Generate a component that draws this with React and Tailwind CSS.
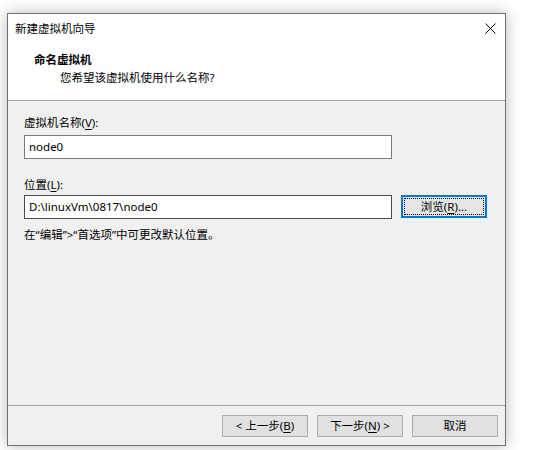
import React from "react";

const F = { fontFamily: '"Noto Sans", "Noto Sans CJK SC", sans-serif' };

function U({ children }) {
  return <span className="underline underline-offset-2">{children}</span>;
}

export default function App() {
  return (
    <div className="w-[556px] h-[450px] bg-white pt-[13px] pl-[7px] overflow-hidden text-black text-[11.5px]" style={F}>
      <div className="w-[499px] h-[433px] border border-[#717171] bg-[#f0f0f0] flex flex-col shadow-[0_0_14px_rgba(0,0,0,0.28)]">
        {/* title bar + header */}
        <div className="bg-white">
          <div className="h-[30px] flex items-center justify-between pl-[7px] pr-[9px]">
            <span className="leading-[16px]">新建虚拟机向导</span>
            <svg width="11" height="11" viewBox="0 0 11 11" className="mt-[-1px]">
              <path d="M0.5 0.5 L10.5 10.5 M10.5 0.5 L0.5 10.5" stroke="#000" strokeWidth="1" fill="none" />
            </svg>
          </div>
          <div className="h-[56px] pt-[8px] pl-[26px] flex flex-col gap-[2px]">
            <span className="font-bold leading-[16px]">命名虚拟机</span>
            <span className="leading-[16px] pl-[26px]">您希望该虚拟机使用什么名称?</span>
          </div>
        </div>
        <div className="h-px bg-[#a0a0a0]" />
        {/* body */}
        <div className="flex-1 flex flex-col pl-[16px] pt-[14px]">
          <span className="leading-[16px]">虚拟机名称(<U>V</U>):</span>
          <div className="mt-[4px] w-[368px] h-[24px] bg-white border border-[#7a7a7a] flex items-center pl-[4px] leading-[16px]">node0</div>
          <span className="mt-[18px] leading-[16px]">位置(<U>L</U>):</span>
          <div className="mt-[2px] flex items-start gap-[9px]">
            <div className="w-[368px] h-[24px] bg-white border border-[#4a4a4a] flex items-center pl-[4px] leading-[16px]">D:\linuxVm\0817\node0</div>
            <div className="w-[86px] h-[23px] border-2 border-[#0078d7] bg-[#e5e5e5] p-px">
              <div className="w-full h-full border border-dotted border-black flex items-center justify-center leading-[16px]">
                浏览(<U>R</U>)...
              </div>
            </div>
          </div>
          <span className="mt-[8px] leading-[16px]">在“编辑”&gt;“首选项”中可更改默认位置。</span>
        </div>
        <div className="h-px bg-[#a0a0a0]" />
        {/* footer */}
        <div className="h-[39px] flex justify-end items-start pt-[9px] pr-[7px] gap-[9px]">
          <button className="w-[86px] h-[22px] bg-[#e1e1e1] border border-[#adadad] flex items-center justify-center leading-[16px]">
            &lt; 上一步(<U>B</U>)
          </button>
          <button className="w-[86px] h-[22px] bg-[#e1e1e1] border border-[#adadad] flex items-center justify-center leading-[16px]">
            下一步(<U>N</U>) &gt;
          </button>
          <button className="w-[86px] h-[22px] bg-[#e1e1e1] border border-[#adadad] flex items-center justify-center leading-[16px]">
            取消
          </button>
        </div>
      </div>
    </div>
  );
}
